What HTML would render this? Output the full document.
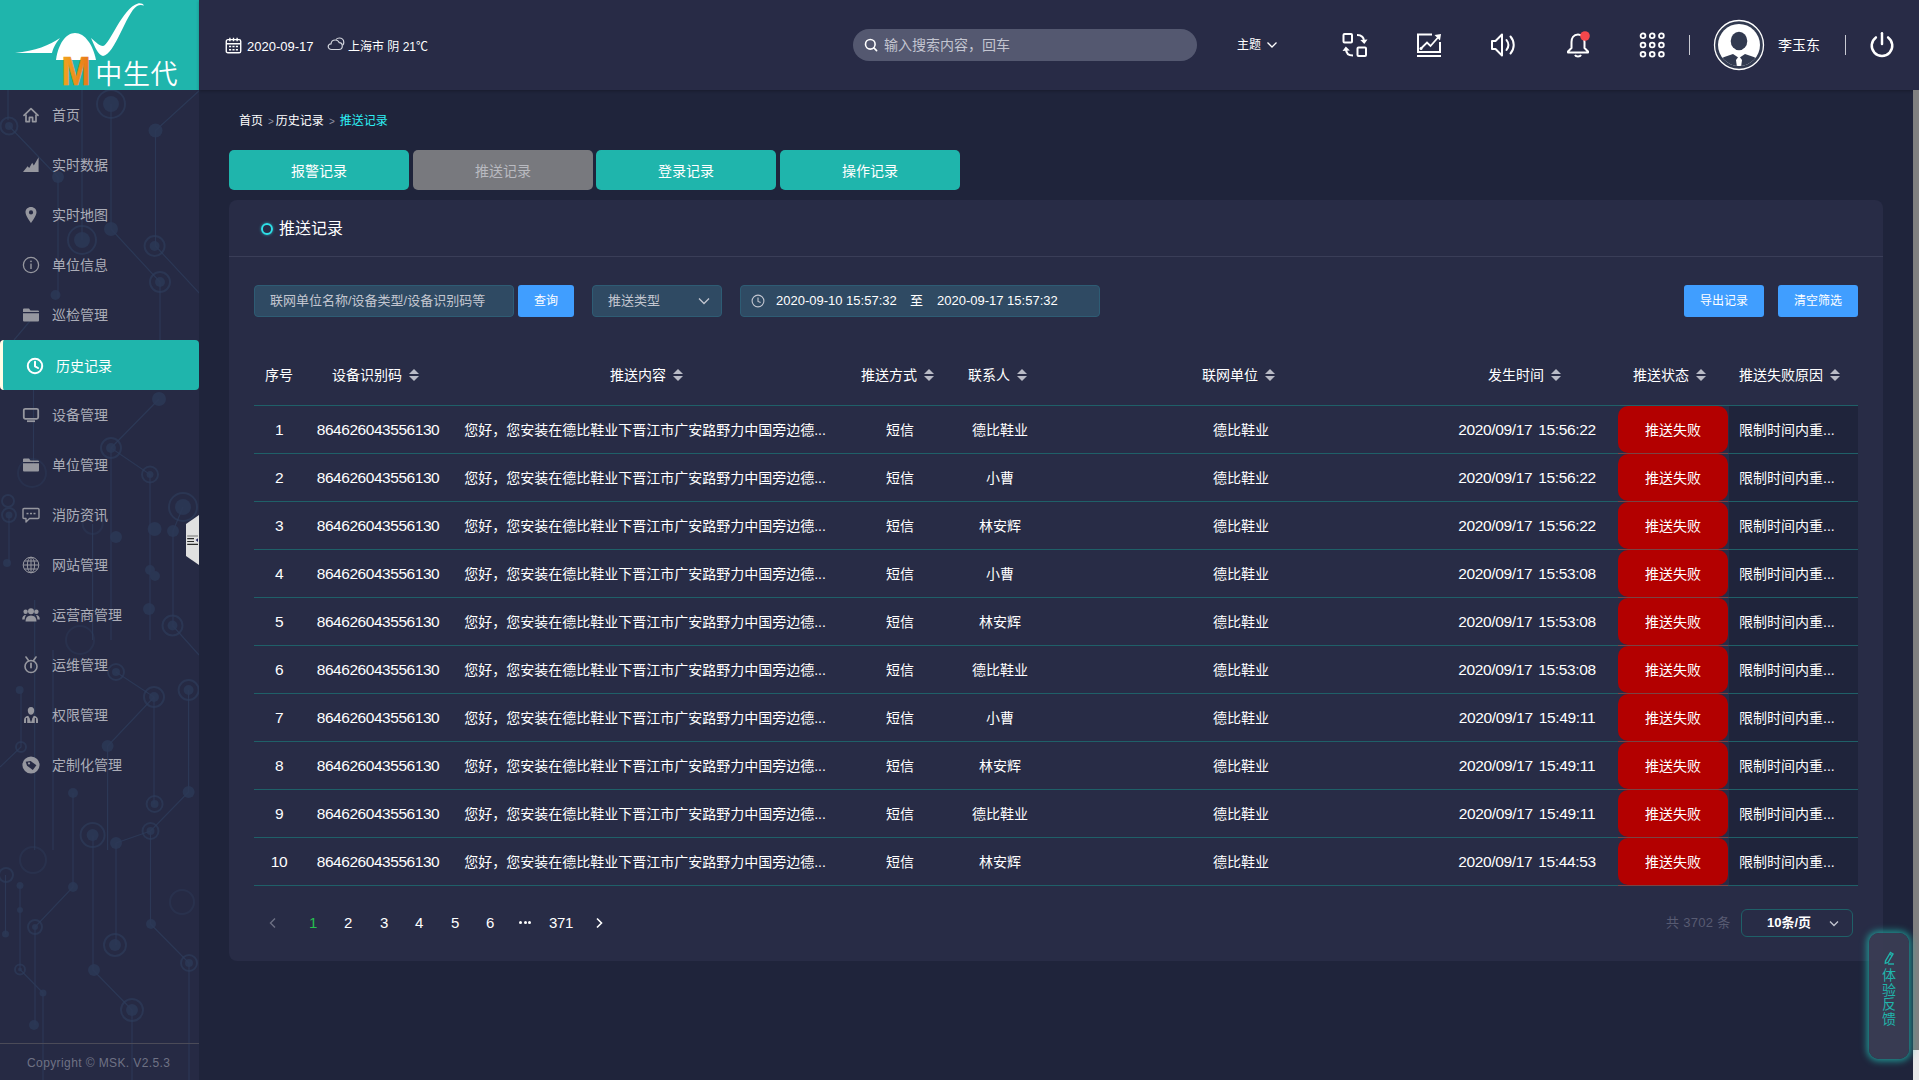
<!DOCTYPE html>
<html lang="zh-CN"><head><meta charset="utf-8"><title>推送记录</title>
<style>
*{box-sizing:border-box;margin:0;padding:0}
html,body{width:1919px;height:1080px;overflow:hidden;background:#1f243b}
body{position:relative;font-family:"Liberation Sans","Noto Sans CJK SC",sans-serif;font-size:14px;color:#fff;-webkit-font-smoothing:antialiased}
.abs{position:absolute}
#side{position:absolute;left:0;top:0;width:199px;height:1080px;background:#262a44;overflow:hidden}
#logo{position:absolute;left:0;top:0;width:199px;height:90px;background:#1fb5ac}
#top{position:absolute;left:199px;top:0;width:1720px;height:90px;background:#282b46;box-shadow:0 1px 3px rgba(0,0,0,.25)}
.mi{position:absolute;left:0;width:199px;height:50px;color:#abadb8;font-size:14px;line-height:50px}
.mi svg{position:absolute;left:21px;top:15px;width:20px;height:20px;color:#96979f}
.mi.on svg{color:#fff}
.mi span{position:absolute;left:52px;top:0;white-space:nowrap}
.mi.on{background:#1fb5ac;color:#fff;border-left:3px solid #fffde6;border-radius:4px}
.mi.on svg{left:22px;top:16px}
.mi.on span{left:53px;top:1px}
.tab{position:absolute;top:150px;height:40px;width:180px;border-radius:5px;background:#1fb5ac;color:#fff;text-align:center;line-height:42px;font-size:14px}
.tab.off{background:#78797e;color:#b9bac0}
#panel{position:absolute;left:229px;top:200px;width:1654px;height:761px;background:#282c46;border-radius:8px}
.inp{position:absolute;top:285px;height:32px;background:#2f4a63;border:1px solid #2e5c74;border-radius:4px;font-size:13px;line-height:30px;color:#c3c6d0;white-space:nowrap}
.btn{position:absolute;top:285px;height:32px;background:#409eff;border-radius:3px;color:#fff;font-size:12px;text-align:center;line-height:33px}
.th{position:absolute;top:360px;height:30px;line-height:30px;font-size:14px;color:#fff;white-space:nowrap}
.st{display:inline-block;position:relative;width:10px;height:14px;margin-left:7px;vertical-align:-2px}
.st:before,.st:after{content:"";position:absolute;left:0;border:5px solid transparent}
.st:before{top:-4px;border-bottom-color:#b9bbc6}
.st:after{top:8px;border-top-color:#b9bbc6}
.hl{position:absolute;left:254px;width:1604px;height:1px;background:#1f6068}
.row{position:absolute;left:254px;width:1604px;height:48px;line-height:48px;font-size:14px;color:#fff;white-space:nowrap}
.row div{position:absolute;top:0;height:48px;text-align:center}
.num{font-size:15.500px;letter-spacing:-.45px;word-spacing:2px}
.fix{position:absolute;left:1729px;top:406px;width:129px;height:480px;background:#1f243b}
.red{position:absolute;left:1618px;width:110px;height:47px;background:#b30000;border-radius:10px;color:#fff;font-size:14px;text-align:center;line-height:48px}
.rl{position:absolute;left:1618px;width:110px;height:1px;background:#7a4343}
.pg{position:absolute;top:908px;height:30px;line-height:30px;font-size:15px;letter-spacing:-.4px;color:#fff;text-align:center;width:30px}
</style></head><body>

<div id="side">
<svg class="abs" style="left:0;top:90px" width="199" height="990" viewBox="0 90 199 990" fill="none" stroke="#2e3d5c" stroke-width="1.2">
<g opacity=".75">
<path d="M111 104 V229 L160 282 V345 M9 126 L58 177 V298 M82 90 V240 M200 90 L155.500 130.500 V246 L200 294 M8 90 V120 M14 340 L30 321"/>
<path d="M159 399 L111 448 L150 474.500 V640 M111 448 V640 M9 515 V563 M92.600 524 V640 M33.500 390 V470 M183 507 L173 531 V625"/>
<path d="M172.500 625.500 L199 655 M116 672 L154 697 L107.600 746 V850 M154 697 V804 M188.600 690 V792 L150.500 831 L116 843 M73 793 V887 L35 927 V1025 M21 690 V747 L0 767 M34.700 600 V850 M53 650 V850"/>
<path d="M150.500 832 V924 L189 963 V1080 M93 835.500 V970 L132 1010 V1080 M116 843 V945 M5.500 875 V934 M20 885 V969.500 L43 993 V1080"/>
</g>
<g fill="#2c3957" stroke="none" opacity=".8">
<circle cx="111" cy="104" r="8"/><circle cx="111" cy="229" r="7"/><circle cx="9" cy="126" r="4"/><circle cx="58" cy="177" r="6"/><circle cx="55.500" cy="295" r="5"/><circle cx="82" cy="240" r="8"/><circle cx="155.500" cy="130.500" r="7"/><circle cx="154.600" cy="246" r="5"/><circle cx="160" cy="282" r="5"/>
<circle cx="159" cy="399" r="7"/><circle cx="111" cy="448" r="5"/><circle cx="150" cy="474.500" r="3.500"/><circle cx="183" cy="507" r="8"/><circle cx="173" cy="531" r="6"/><circle cx="154.600" cy="529" r="7"/><circle cx="116" cy="537" r="6"/><circle cx="150" cy="570" r="5"/><circle cx="155" cy="576" r="5"/><circle cx="149" cy="609" r="6"/><circle cx="9" cy="515" r="3.500"/><circle cx="7" cy="563" r="4"/>
<circle cx="172.500" cy="625.500" r="5"/><circle cx="116" cy="672" r="4"/><circle cx="154" cy="697" r="5"/><circle cx="107.600" cy="746" r="6"/><circle cx="188.600" cy="690" r="5"/><circle cx="188.600" cy="792" r="6"/><circle cx="150.500" cy="831" r="4"/><circle cx="116" cy="843" r="6"/><circle cx="92.600" cy="835" r="6"/><circle cx="73" cy="793" r="5"/><circle cx="19.700" cy="690" r="4"/><circle cx="154.600" cy="804" r="4"/>
<circle cx="151" cy="924" r="5"/><circle cx="189" cy="963" r="4"/><circle cx="94" cy="970" r="6"/><circle cx="132" cy="1010" r="6"/><circle cx="115" cy="945" r="6"/><circle cx="73" cy="887" r="5"/><circle cx="35" cy="927" r="3"/><circle cx="34" cy="1025" r="5"/><circle cx="5.500" cy="934" r="3.500"/><circle cx="20" cy="885.500" r="3.500"/><circle cx="20" cy="910" r="3"/><circle cx="43" cy="993" r="3.500"/><circle cx="20" cy="969.500" r="2"/>
</g>
<g stroke-width="2" opacity=".65">
<circle cx="111" cy="104" r="14"/><circle cx="9" cy="126" r="8.500"/><circle cx="82" cy="240" r="14"/><circle cx="154.600" cy="246" r="10"/><circle cx="160" cy="282" r="10"/>
<circle cx="111" cy="448" r="10"/><circle cx="150" cy="474.500" r="8"/><circle cx="183" cy="507" r="14"/><circle cx="9" cy="515" r="7"/><circle cx="8" cy="501" r="6"/>
<circle cx="172.500" cy="625.500" r="10"/><circle cx="116" cy="672" r="8"/><circle cx="154" cy="697" r="10"/><circle cx="188.600" cy="690" r="10"/><circle cx="150.500" cy="831" r="8"/><circle cx="92.600" cy="835" r="12"/><circle cx="21" cy="747" r="5"/><circle cx="154.600" cy="804" r="8"/>
<circle cx="189" cy="963" r="8"/><circle cx="132" cy="1010" r="11"/><circle cx="115" cy="945" r="11"/><circle cx="35" cy="927" r="7"/><circle cx="6" cy="875" r="7"/><circle cx="20" cy="969.500" r="5"/>
</g>
<g stroke-width="2" opacity=".4"><circle cx="32" cy="473" r="14"/><circle cx="92.600" cy="524" r="10"/><circle cx="33" cy="860" r="13"/><circle cx="182" cy="902" r="12"/><circle cx="80" cy="640" r="14"/></g>
</svg>
<div id="logo"><svg class="abs" style="left:0;top:0" width="199" height="90" viewBox="0 0 199 90">
<defs><linearGradient id="mg" x1="0" x2="1" y1="0" y2="0"><stop offset="0" stop-color="#f2a51f"/><stop offset="1" stop-color="#e87818"/></linearGradient></defs>
<path d="M15 53 C35 51 50 45 60 38 C55 44 53 49 52 53 Z" fill="#fff"/>
<path d="M56 60 C58 44 66 33 75 33 C85 33 93 45 96 60 Z" fill="#fff"/>
<path d="M91 38 C96 42 99 46 103 46 C110 45 122 8 138 3.5 C141 3 143 4 144 5.5 C141 4.5 139 5 137 6 C126 13 115 55 103 56 C98 55 95 47 91 38 Z" fill="#fff"/>
<text x="61.500" y="85.300" font-family="Liberation Sans, sans-serif" font-weight="bold" font-size="41" fill="url(#mg)" stroke="url(#mg)" stroke-width=".7" textLength="29" lengthAdjust="spacingAndGlyphs">M</text>
<text x="95.300" y="84" font-family="Noto Sans CJK SC, sans-serif" font-weight="350" font-size="27" letter-spacing=".6" fill="#fff">中生代</text>
</svg></div>
<div class="mi" style="top:90px"><svg viewBox="0 0 20 20"><path d="M3 10.3 L10 3.6 L17 10.3" fill="none" stroke="currentColor" stroke-width="1.7" stroke-linecap="round" stroke-linejoin="round"/><path d="M5 9.6 V16.6 H8.4 V12.4 H11.6 V16.6 H15 V9.6" fill="none" stroke="currentColor" stroke-width="1.7" stroke-linejoin="round"/></svg><span>首页</span></div>
<div class="mi" style="top:140px"><svg viewBox="0 0 20 20"><path d="M2 17 L6.6 11.3 L8.2 13 L11.2 7.8 L12.8 10.4 L17.6 2.3 L17.6 17 Z" fill="currentColor"/></svg><span>实时数据</span></div>
<div class="mi" style="top:190px"><svg viewBox="0 0 20 20"><path d="M10 2 C6.7 2 4.5 4.4 4.5 7.3 C4.5 11 10 18 10 18 C10 18 15.5 11 15.5 7.3 C15.5 4.4 13.3 2 10 2 Z M10 5.3 A2.1 2.1 0 1 1 10 9.5 A2.1 2.1 0 1 1 10 5.3 Z" fill="currentColor" fill-rule="evenodd"/></svg><span>实时地图</span></div>
<div class="mi" style="top:240px"><svg viewBox="0 0 20 20"><circle cx="10" cy="10" r="7.6" fill="none" stroke="currentColor" stroke-width="1.3"/><rect x="9.3" y="8.6" width="1.4" height="5.4" fill="currentColor"/><circle cx="10" cy="6.3" r="0.9" fill="currentColor"/></svg><span>单位信息</span></div>
<div class="mi" style="top:290px"><svg viewBox="0 0 20 20"><path d="M2 4.5 Q2 3.5 3 3.5 H8 L9.5 5.5 H17 Q18 5.5 18 6.5 V7 H2 Z" fill="currentColor"/><path d="M2 8.2 H18 V15.5 Q18 16.5 17 16.5 H3 Q2 16.5 2 15.5 Z" fill="currentColor"/></svg><span>巡检管理</span></div>
<div class="mi on" style="top:340px"><svg viewBox="0 0 20 20"><circle cx="10" cy="10" r="7.2" fill="none" stroke="currentColor" stroke-width="2"/><path d="M10 5.8 V10.3 L13 12" fill="none" stroke="currentColor" stroke-width="2" stroke-linecap="round" stroke-linejoin="round"/></svg><span>历史记录</span></div>
<div class="mi" style="top:390px"><svg viewBox="0 0 20 20"><rect x="2.8" y="3.8" width="14.4" height="10" rx="1.5" fill="none" stroke="currentColor" stroke-width="1.8"/><rect x="6" y="15.3" width="8" height="1.8" fill="currentColor"/></svg><span>设备管理</span></div>
<div class="mi" style="top:440px"><svg viewBox="0 0 20 20"><path d="M2 4.5 Q2 3.5 3 3.5 H8 L9.5 5.5 H17 Q18 5.5 18 6.5 V7 H2 Z" fill="currentColor"/><path d="M2 8.2 H18 V15.5 Q18 16.5 17 16.5 H3 Q2 16.5 2 15.5 Z" fill="currentColor"/></svg><span>单位管理</span></div>
<div class="mi" style="top:490px"><svg viewBox="0 0 20 20"><path d="M3 3.5 H17 Q18 3.5 18 4.5 V12.5 Q18 13.5 17 13.5 H8.5 L5 17 V13.5 H3 Q2 13.5 2 12.5 V4.5 Q2 3.5 3 3.5 Z" fill="none" stroke="currentColor" stroke-width="1.4" stroke-linejoin="round"/><rect x="5.5" y="7.8" width="2" height="1.5" fill="currentColor"/><rect x="9" y="7.8" width="2" height="1.5" fill="currentColor"/><rect x="12.5" y="7.8" width="2" height="1.5" fill="currentColor"/></svg><span>消防资讯</span></div>
<div class="mi" style="top:540px"><svg viewBox="0 0 20 20"><g fill="none" stroke="currentColor" stroke-width="1"><circle cx="10" cy="10" r="7.8"/><ellipse cx="10" cy="10" rx="3.6" ry="7.8"/><path d="M10 2.2 V17.8 M2.2 10 H17.8 M3.4 6 H16.6 M3.4 14 H16.6"/></g></svg><span>网站管理</span></div>
<div class="mi" style="top:590px"><svg viewBox="0 0 20 20"><g fill="currentColor"><circle cx="10" cy="6.2" r="3"/><path d="M4.5 16.5 Q4.5 10.5 10 10.5 Q15.5 10.5 15.5 16.5 Z"/><circle cx="4.6" cy="6.8" r="2.2"/><circle cx="15.4" cy="6.8" r="2.2"/><path d="M1.2 14.5 Q1.2 10 5 10 Q3.6 12 3.6 14.5 Z"/><path d="M18.8 14.5 Q18.8 10 15 10 Q16.4 12 16.4 14.5 Z"/></g></svg><span>运营商管理</span></div>
<div class="mi" style="top:640px"><svg viewBox="0 0 20 20"><circle cx="10" cy="11.5" r="6" fill="none" stroke="currentColor" stroke-width="1.6"/><path d="M10 8.5 V12.5" stroke="currentColor" stroke-width="1.8" stroke-linecap="round"/><path d="M5 2 L7.5 5.5 M15 2 L12.5 5.5" stroke="currentColor" stroke-width="1.6" stroke-linecap="round"/></svg><span>运维管理</span></div>
<div class="mi" style="top:690px"><svg viewBox="0 0 20 20"><g fill="currentColor"><path d="M10 2 C7.6 2 6.6 3.8 6.8 6 C7 8.3 8.3 9.8 10 9.8 C11.7 9.8 13 8.3 13.2 6 C13.4 3.8 12.4 2 10 2 Z"/><path d="M3 18 V15 Q3 11.5 7.2 10.8 L10 15.5 L12.8 10.8 Q17 11.5 17 15 V18 Z"/></g><path d="M10 11 L8.8 14 L10 17.5 L11.2 14 Z" fill="#262a44"/><rect x="5" y="13" width="1.2" height="5" fill="#262a44"/><rect x="13.8" y="13" width="1.2" height="5" fill="#262a44"/></svg><span>权限管理</span></div>
<div class="mi" style="top:740px"><svg viewBox="0 0 20 20"><circle cx="10" cy="10" r="8.6" fill="currentColor"/><path d="M5.2 6 L10.2 6 L15.3 11.1 L11.1 15.3 L6 10.2 Z" transform="rotate(-8 10 10)" fill="#262a44"/><circle cx="8" cy="8.4" r="1.1" fill="currentColor"/></svg><span>定制化管理</span></div>
<svg class="abs" style="left:186px;top:515px" width="13" height="50" viewBox="0 0 13 50"><path d="M13 0 L0 9 V41 L13 50 Z" fill="#e0e0e0"/><path d="M1.2 21 H12" stroke="#8c8c8c" stroke-width="1.3"/><path d="M1.2 23.6 H8 M1.2 26.5 H8 M1.2 29.4 H12" stroke="#2a2a2a" stroke-width="1.1"/><path d="M12 23.2 L9.6 25 L12 26.9 Z" fill="#2a2a60"/></svg>
<div class="abs" style="left:0;top:1043px;width:199px;height:1px;background:#4b4b58"></div>
<div class="abs" style="left:27px;top:1055px;font-size:12px;letter-spacing:.4px;line-height:16px;color:#6f7284;white-space:nowrap">Copyright © MSK. V2.5.3</div>
</div>
<div id="top">
<div class="abs" style="left:-199px;top:0;width:1919px;height:90px">
<svg class="abs" style="left:224.500px;top:36.500px" width="17" height="17" viewBox="0 0 16 16" fill="none" stroke="#fff" stroke-width="1.3"><rect x="1.200" y="2.500" width="13.600" height="12.300" rx="1.500"/><path d="M1.200 6.300 H14.800 M4.600 .8 V4 M8 .8 V4 M11.400 .8 V4"/><path d="M3.800 9 H5.800 M7 9 H9 M10.200 9 H12.200 M3.800 12 H5.800 M7 12 H9 M10.200 12 H12.200" stroke-width="1.500"/></svg>
<div class="abs" style="left:247px;top:37px;line-height:20px;font-size:13px;white-space:nowrap">2020-09-17</div>
<svg class="abs" style="left:327px;top:37px" width="18" height="14" viewBox="0 0 18 14" fill="none" stroke="#d4d6de" stroke-width="1.200"><path d="M4.500 12.500 C2.500 12.500 1.200 11.200 1.200 9.600 C1.200 8 2.500 6.800 4 6.800 C4.300 4.600 6 3 8.200 3 C10 3 11.500 4 12.200 5.600 C14 5.700 15.300 7.200 15.300 9 C15.300 11 13.800 12.500 12 12.500 Z"/><path d="M9 2.500 C9.800 1.500 11 1 12.300 1 C14.800 1 16.800 3 16.800 5.400 C16.800 6.500 16.400 7.500 15.700 8.200"/></svg>
<div class="abs" style="left:348px;top:37px;line-height:20px;font-size:12px;white-space:nowrap">上海市 阴 21℃</div>
<div class="abs" style="left:853px;top:29px;width:344px;height:32px;border-radius:16px;background:#545870"></div>
<svg class="abs" style="left:863px;top:37px" width="16" height="16" viewBox="0 0 16 16" fill="none" stroke="#fff" stroke-width="1.600" stroke-linecap="round"><circle cx="7.300" cy="7.300" r="4.800"/><path d="M10.900 10.900 L13.600 13.600"/></svg>
<div class="abs" style="left:884px;top:35px;line-height:20px;font-size:14px;color:#c3c5d0;white-space:nowrap">输入搜索内容，回车</div>
<div class="abs" style="left:1237px;top:35px;line-height:20px;font-size:12px;white-space:nowrap">主题</div>
<svg class="abs" style="left:1266px;top:40px" width="12" height="10" viewBox="0 0 12 10" fill="none" stroke="#fff" stroke-width="1.300"><path d="M1.500 2.500 L6 7 L10.500 2.500"/></svg>
<svg class="abs" style="left:1341px;top:31px" width="28" height="28" viewBox="0 0 28 28" fill="none" stroke="#fff" stroke-width="2"><rect x="2.500" y="3" width="8.500" height="8.500" rx="1"/><rect x="16.500" y="16.500" width="8.500" height="8.500" rx="1"/><path d="M16 4 C20.500 4 23 6.500 23 10.500"/><path d="M19.300 9 L23.300 13 L26.500 8.500 Z" fill="#fff" stroke="none"/><path d="M12 24.500 C7.500 24.500 5 22 5 18"/><path d="M1.500 20 L4.800 15.500 L8.800 19.500 Z" fill="#fff" stroke="none"/></svg>
<svg class="abs" style="left:1415px;top:31px" width="28" height="28" viewBox="0 0 28 28" fill="none" stroke="#fff" stroke-width="2"><path d="M17 3.500 H3 V21 H25 V11"/><path d="M2 25 H26"/><path d="M6 17.500 L12 11.500 L15.500 15 L23 6.500" stroke-width="1.800"/><path d="M19.500 4 L26 3 L25 9.500 Z" fill="#fff" stroke="none"/><circle cx="6" cy="17.500" r="1.500" fill="#fff" stroke="none"/></svg>
<svg class="abs" style="left:1489px;top:31px" width="28" height="28" viewBox="0 0 28 28" fill="none" stroke="#fff" stroke-width="2" stroke-linejoin="round"><path d="M3 10 H6.500 L13 3.500 V24.500 L6.500 18 H3 Z"/><path d="M17.500 9 C19.800 12 19.800 16 17.500 19" stroke-linecap="round"/><path d="M21.500 5.500 C25.800 10.500 25.800 17.500 21.500 22.500" stroke-linecap="round"/></svg>
<svg class="abs" style="left:1564px;top:31px" width="28" height="28" viewBox="0 0 28 28" fill="none" stroke="#fff" stroke-width="2" stroke-linejoin="round"><path d="M14 3.500 C9.500 3.500 7.500 7 7.500 11 V17 L4 20.500 V21.500 H24 V20.500 L20.500 17 V11 C20.500 7 18.500 3.500 14 3.500 Z"/><path d="M11 24 C12 26 16 26 17 24"/><circle cx="21" cy="5" r="4.800" fill="#f5474c" stroke="none"/></svg>
<svg class="abs" style="left:1638px;top:31px" width="28" height="28" viewBox="0 0 28 28" fill="none" stroke="#fff" stroke-width="1.800"><circle cx="5.0" cy="4.8" r="2.400"/><circle cx="14.2" cy="4.8" r="2.400"/><circle cx="23.4" cy="4.8" r="2.400"/><circle cx="5.0" cy="14.0" r="2.400"/><circle cx="14.2" cy="14.0" r="2.400"/><circle cx="23.4" cy="14.0" r="2.400"/><circle cx="5.0" cy="23.2" r="2.400"/><circle cx="14.2" cy="23.2" r="2.400"/><circle cx="23.4" cy="23.2" r="2.400"/></svg>
<div class="abs" style="left:1689px;top:35px;width:1px;height:20px;background:#c9cad2"></div>
<svg class="abs" style="left:1713px;top:19px" width="52" height="52" viewBox="0 0 52 52"><defs><clipPath id="av"><circle cx="26" cy="26" r="21"/></clipPath></defs><circle cx="26" cy="26" r="24.500" fill="#323a50" stroke="#fff" stroke-width="1.300"/><circle cx="26" cy="26" r="21" fill="#fff"/><g clip-path="url(#av)"><ellipse cx="26" cy="22" rx="8.300" ry="9.200" fill="#323a50"/><path d="M3 50 V42 Q10 38 20 35 L26 39 L32 35 Q42 38 49 42 V50 Z" fill="#323a50"/><path d="M26 37 L23 41 L24.500 52 H27.500 L29 41 Z" fill="#fff"/></g></svg>
<div class="abs" style="left:1778px;top:35px;line-height:20px;font-size:14px;white-space:nowrap">李玉东</div>
<div class="abs" style="left:1845px;top:35px;width:1px;height:20px;background:#c9cad2"></div>
<svg class="abs" style="left:1867px;top:30px" width="30" height="30" viewBox="0 0 28 28" fill="none" stroke="#fff" stroke-width="2.300" stroke-linecap="round"><path d="M14 3 V13"/><path d="M8.3 6.9 A9.6 9.6 0 1 0 19.7 6.9"/></svg>
</div></div>
<div class="abs" style="left:239px;top:112px;line-height:18px;font-size:12px;white-space:nowrap"><span>首页</span><span style="color:#8f92a3;font-size:10px;margin:0 2px 0 5px">&gt;</span><span>历史记录</span><span style="color:#8f92a3;font-size:10px;margin:0 5px 0 5px">&gt;</span><span style="color:#2ef0f5">推送记录</span></div>
<div class="tab" style="left:229px">报警记录</div>
<div class="tab off" style="left:413px">推送记录</div>
<div class="tab" style="left:596px">登录记录</div>
<div class="tab" style="left:780px">操作记录</div>
<div id="panel"></div>
<div class="abs" style="left:261px;top:223px;width:12px;height:12px;border:2.500px solid #2ee0e8;border-radius:50%;box-shadow:0 0 3px rgba(46,224,232,.6)"></div>
<div class="abs" style="left:279px;top:217px;line-height:24px;font-size:16px;white-space:nowrap">推送记录</div>
<div class="abs" style="left:229px;top:256px;width:1654px;height:1px;background:#3a3e58"></div>
<div class="inp" style="left:254px;width:260px;padding-left:15px">联网单位名称/设备类型/设备识别码等</div>
<div class="btn" style="left:518px;width:56px">查询</div>
<div class="inp" style="left:592px;width:130px;padding-left:15px">推送类型</div>
<svg class="abs" style="left:697px;top:296px" width="14" height="10" viewBox="0 0 14 10" fill="none" stroke="#c3c6d0" stroke-width="1.300"><path d="M2 2.500 L7 7.500 L12 2.500"/></svg>
<div class="inp" style="left:740px;width:360px;color:#fff"><span class="abs" style="left:35px;top:0">2020-09-10 15:57:32</span><span class="abs" style="left:169px;top:0">至</span><span class="abs" style="left:196px;top:0">2020-09-17 15:57:32</span></div>
<svg class="abs" style="left:751px;top:294px" width="14" height="14" viewBox="0 0 14 14" fill="none" stroke="#c3c6d0" stroke-width="1.100"><circle cx="7" cy="7" r="5.900"/><path d="M7 3.500 V7.500 L9.600 8.600"/></svg>
<div class="btn" style="left:1684px;width:80px">导出记录</div>
<div class="btn" style="left:1778px;width:80px">清空筛选</div>
<div class="th" style="left:265px">序号</div>
<div class="th" style="left:332px">设备识别码<i class="st"></i></div>
<div class="th" style="left:610px">推送内容<i class="st"></i></div>
<div class="th" style="left:861px">推送方式<i class="st"></i></div>
<div class="th" style="left:968px">联系人<i class="st"></i></div>
<div class="th" style="left:1202px">联网单位<i class="st"></i></div>
<div class="th" style="left:1488px">发生时间<i class="st"></i></div>
<div class="th" style="left:1633px">推送状态<i class="st"></i></div>
<div class="th" style="left:1739px">推送失败原因<i class="st"></i></div>
<div class="hl" style="top:405px"></div>
<div class="fix"></div>
<div class="row" style="top:406px"><div class="num" style="left:0;width:50px">1</div><div class="num" style="left:50px;width:148px">864626043556130</div><div style="left:198px;width:386px">您好，您安装在德比鞋业下晋江市广安路野力中国旁边德...</div><div style="left:586px;width:120px">短信</div><div style="left:706px;width:80px">德比鞋业</div><div style="left:786px;width:402px">德比鞋业</div><div class="num" style="left:1188px;width:170px;letter-spacing:-.35px">2020/09/17 15:56:22</div><div style="left:1485px;width:110px;text-align:left">限制时间内重...</div></div>
<div class="hl" style="top:453px"></div>
<div class="red" style="top:406px">推送失败</div>
<div class="rl" style="top:453px"></div>
<div class="row" style="top:454px"><div class="num" style="left:0;width:50px">2</div><div class="num" style="left:50px;width:148px">864626043556130</div><div style="left:198px;width:386px">您好，您安装在德比鞋业下晋江市广安路野力中国旁边德...</div><div style="left:586px;width:120px">短信</div><div style="left:706px;width:80px">小曹</div><div style="left:786px;width:402px">德比鞋业</div><div class="num" style="left:1188px;width:170px;letter-spacing:-.35px">2020/09/17 15:56:22</div><div style="left:1485px;width:110px;text-align:left">限制时间内重...</div></div>
<div class="hl" style="top:501px"></div>
<div class="red" style="top:454px">推送失败</div>
<div class="rl" style="top:501px"></div>
<div class="row" style="top:502px"><div class="num" style="left:0;width:50px">3</div><div class="num" style="left:50px;width:148px">864626043556130</div><div style="left:198px;width:386px">您好，您安装在德比鞋业下晋江市广安路野力中国旁边德...</div><div style="left:586px;width:120px">短信</div><div style="left:706px;width:80px">林安辉</div><div style="left:786px;width:402px">德比鞋业</div><div class="num" style="left:1188px;width:170px;letter-spacing:-.35px">2020/09/17 15:56:22</div><div style="left:1485px;width:110px;text-align:left">限制时间内重...</div></div>
<div class="hl" style="top:549px"></div>
<div class="red" style="top:502px">推送失败</div>
<div class="rl" style="top:549px"></div>
<div class="row" style="top:550px"><div class="num" style="left:0;width:50px">4</div><div class="num" style="left:50px;width:148px">864626043556130</div><div style="left:198px;width:386px">您好，您安装在德比鞋业下晋江市广安路野力中国旁边德...</div><div style="left:586px;width:120px">短信</div><div style="left:706px;width:80px">小曹</div><div style="left:786px;width:402px">德比鞋业</div><div class="num" style="left:1188px;width:170px;letter-spacing:-.35px">2020/09/17 15:53:08</div><div style="left:1485px;width:110px;text-align:left">限制时间内重...</div></div>
<div class="hl" style="top:597px"></div>
<div class="red" style="top:550px">推送失败</div>
<div class="rl" style="top:597px"></div>
<div class="row" style="top:598px"><div class="num" style="left:0;width:50px">5</div><div class="num" style="left:50px;width:148px">864626043556130</div><div style="left:198px;width:386px">您好，您安装在德比鞋业下晋江市广安路野力中国旁边德...</div><div style="left:586px;width:120px">短信</div><div style="left:706px;width:80px">林安辉</div><div style="left:786px;width:402px">德比鞋业</div><div class="num" style="left:1188px;width:170px;letter-spacing:-.35px">2020/09/17 15:53:08</div><div style="left:1485px;width:110px;text-align:left">限制时间内重...</div></div>
<div class="hl" style="top:645px"></div>
<div class="red" style="top:598px">推送失败</div>
<div class="rl" style="top:645px"></div>
<div class="row" style="top:646px"><div class="num" style="left:0;width:50px">6</div><div class="num" style="left:50px;width:148px">864626043556130</div><div style="left:198px;width:386px">您好，您安装在德比鞋业下晋江市广安路野力中国旁边德...</div><div style="left:586px;width:120px">短信</div><div style="left:706px;width:80px">德比鞋业</div><div style="left:786px;width:402px">德比鞋业</div><div class="num" style="left:1188px;width:170px;letter-spacing:-.35px">2020/09/17 15:53:08</div><div style="left:1485px;width:110px;text-align:left">限制时间内重...</div></div>
<div class="hl" style="top:693px"></div>
<div class="red" style="top:646px">推送失败</div>
<div class="rl" style="top:693px"></div>
<div class="row" style="top:694px"><div class="num" style="left:0;width:50px">7</div><div class="num" style="left:50px;width:148px">864626043556130</div><div style="left:198px;width:386px">您好，您安装在德比鞋业下晋江市广安路野力中国旁边德...</div><div style="left:586px;width:120px">短信</div><div style="left:706px;width:80px">小曹</div><div style="left:786px;width:402px">德比鞋业</div><div class="num" style="left:1188px;width:170px;letter-spacing:-.35px">2020/09/17 15:49:11</div><div style="left:1485px;width:110px;text-align:left">限制时间内重...</div></div>
<div class="hl" style="top:741px"></div>
<div class="red" style="top:694px">推送失败</div>
<div class="rl" style="top:741px"></div>
<div class="row" style="top:742px"><div class="num" style="left:0;width:50px">8</div><div class="num" style="left:50px;width:148px">864626043556130</div><div style="left:198px;width:386px">您好，您安装在德比鞋业下晋江市广安路野力中国旁边德...</div><div style="left:586px;width:120px">短信</div><div style="left:706px;width:80px">林安辉</div><div style="left:786px;width:402px">德比鞋业</div><div class="num" style="left:1188px;width:170px;letter-spacing:-.35px">2020/09/17 15:49:11</div><div style="left:1485px;width:110px;text-align:left">限制时间内重...</div></div>
<div class="hl" style="top:789px"></div>
<div class="red" style="top:742px">推送失败</div>
<div class="rl" style="top:789px"></div>
<div class="row" style="top:790px"><div class="num" style="left:0;width:50px">9</div><div class="num" style="left:50px;width:148px">864626043556130</div><div style="left:198px;width:386px">您好，您安装在德比鞋业下晋江市广安路野力中国旁边德...</div><div style="left:586px;width:120px">短信</div><div style="left:706px;width:80px">德比鞋业</div><div style="left:786px;width:402px">德比鞋业</div><div class="num" style="left:1188px;width:170px;letter-spacing:-.35px">2020/09/17 15:49:11</div><div style="left:1485px;width:110px;text-align:left">限制时间内重...</div></div>
<div class="hl" style="top:837px"></div>
<div class="red" style="top:790px">推送失败</div>
<div class="rl" style="top:837px"></div>
<div class="row" style="top:838px"><div class="num" style="left:0;width:50px">10</div><div class="num" style="left:50px;width:148px">864626043556130</div><div style="left:198px;width:386px">您好，您安装在德比鞋业下晋江市广安路野力中国旁边德...</div><div style="left:586px;width:120px">短信</div><div style="left:706px;width:80px">林安辉</div><div style="left:786px;width:402px">德比鞋业</div><div class="num" style="left:1188px;width:170px;letter-spacing:-.35px">2020/09/17 15:44:53</div><div style="left:1485px;width:110px;text-align:left">限制时间内重...</div></div>
<div class="hl" style="top:885px"></div>
<div class="red" style="top:838px">推送失败</div>
<div class="rl" style="top:885px"></div>
<svg class="abs" style="left:267px;top:917px" width="12" height="12" viewBox="0 0 12 12" fill="none" stroke="#6d7084" stroke-width="1.400"><path d="M8 1.500 L3.500 6 L8 10.500"/></svg>
<div class="pg" style="left:298px;color:#26c050">1</div>
<div class="pg" style="left:333px;color:#fff">2</div>
<div class="pg" style="left:369px;color:#fff">3</div>
<div class="pg" style="left:404px;color:#fff">4</div>
<div class="pg" style="left:440px;color:#fff">5</div>
<div class="pg" style="left:475px;color:#fff">6</div>
<div class="pg" style="left:546px;color:#fff">371</div>
<div class="abs" style="left:519px;top:921px;width:12px;height:4px"><i class="abs" style="left:0;top:0;width:3px;height:3px;border-radius:50%;background:#fff"></i><i class="abs" style="left:4.500px;top:0;width:3px;height:3px;border-radius:50%;background:#fff"></i><i class="abs" style="left:9px;top:0;width:3px;height:3px;border-radius:50%;background:#fff"></i></div>
<svg class="abs" style="left:593px;top:917px" width="12" height="12" viewBox="0 0 12 12" fill="none" stroke="#fff" stroke-width="1.600"><path d="M4 1.500 L8.500 6 L4 10.500"/></svg>
<div class="abs" style="left:1666px;top:913px;line-height:20px;font-size:13px;letter-spacing:.3px;color:#585b72;white-space:nowrap">共 3702 条</div>
<div class="abs" style="left:1741px;top:909px;width:112px;height:28px;border:1px solid #1f6068;border-radius:6px"></div>
<div class="abs" style="left:1767px;top:913px;line-height:20px;font-size:13px;font-weight:bold;white-space:nowrap">10条/页</div>
<svg class="abs" style="left:1828px;top:919px" width="12" height="10" viewBox="0 0 12 10" fill="none" stroke="#c3c6d0" stroke-width="1.300"><path d="M2 2.500 L6 6.500 L10 2.500"/></svg>
<div class="abs" style="left:1913px;top:90px;width:6px;height:990px;background:#e8e9ea"></div>
<div class="abs" style="left:1913px;top:90px;width:6px;height:960px;background:#808080"></div>
<div class="abs" style="left:1869px;top:933px;width:40px;height:126px;border-radius:10px;background:rgba(58,61,84,.94);box-shadow:0 0 7px 2px rgba(32,181,171,.8)"></div>
<svg class="abs" style="left:1882px;top:951px" width="14" height="14" viewBox="0 0 14 14" fill="none" stroke="#20b5ab" stroke-width="1.400"><path d="M8.500 1.500 L11 3 L6 11.500 L3.300 12.300 L3.500 10 Z"/><path d="M7.500 3 L10 4.500"/><path d="M6 13 H12"/></svg>
<div class="abs" style="left:1882px;top:968px;width:14px;font-size:14px;line-height:14.500px;color:#20b5ab;text-align:center">体<br>验<br>反<br>馈</div>
</body></html>
